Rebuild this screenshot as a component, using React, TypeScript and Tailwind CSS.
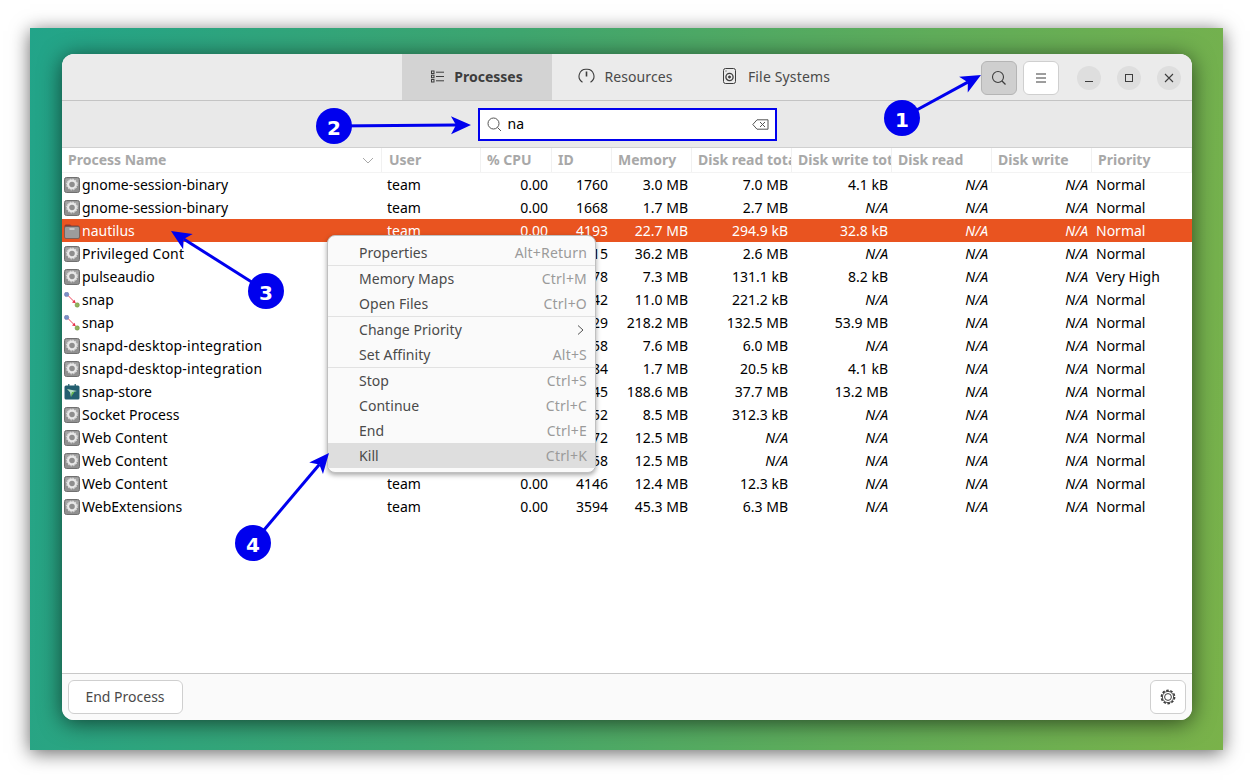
import React from "react";

const cols = "grid grid-cols-[320px_99px_71px_60px_80px_100px_100px_100px_100px_100px]";
type Kind = "exec" | "folder" | "snap" | "store";
type Row = [Kind, string, string, string, string, string, string, string];
const rows: Row[] = [
  ["exec", "gnome-session-binary", "1760", "3.0 MB", "7.0 MB", "4.1 kB", "Normal", ""],
  ["exec", "gnome-session-binary", "1668", "1.7 MB", "2.7 MB", "N/A", "Normal", ""],
  ["folder", "nautilus", "4193", "22.7 MB", "294.9 kB", "32.8 kB", "Normal", "sel"],
  ["exec", "Privileged Cont", "4115", "36.2 MB", "2.6 MB", "N/A", "Normal", ""],
  ["exec", "pulseaudio", "1678", "7.3 MB", "131.1 kB", "8.2 kB", "Very High", ""],
  ["snap", "snap", "1642", "11.0 MB", "221.2 kB", "N/A", "Normal", ""],
  ["snap", "snap", "1529", "218.2 MB", "132.5 MB", "53.9 MB", "Normal", ""],
  ["exec", "snapd-desktop-integration", "1958", "7.6 MB", "6.0 MB", "N/A", "Normal", ""],
  ["exec", "snapd-desktop-integration", "1884", "1.7 MB", "20.5 kB", "4.1 kB", "Normal", ""],
  ["store", "snap-store", "2045", "188.6 MB", "37.7 MB", "13.2 MB", "Normal", ""],
  ["exec", "Socket Process", "4052", "8.5 MB", "312.3 kB", "N/A", "Normal", ""],
  ["exec", "Web Content", "4172", "12.5 MB", "N/A", "N/A", "Normal", ""],
  ["exec", "Web Content", "4158", "12.5 MB", "N/A", "N/A", "Normal", ""],
  ["exec", "Web Content", "4146", "12.4 MB", "12.3 kB", "N/A", "Normal", ""],
  ["exec", "WebExtensions", "3594", "45.3 MB", "6.3 MB", "N/A", "Normal", ""],
];

function ProcIcon({ kind }: { kind: Kind }) {
  if (kind === "exec")
    return (
      <svg width="16" height="16" viewBox="0 0 16 16">
        <rect x="0.5" y="0.5" width="15" height="15" rx="2" fill="#909090" stroke="#707070" />
        <rect x="1.5" y="1.5" width="13" height="6" rx="1" fill="#a4a4a4" />
        <circle cx="8" cy="7.5" r="3.9" fill="#8e8e8e" stroke="#e8e8e8" strokeWidth="2.2" />
        <circle cx="8" cy="7.5" r="5.4" fill="none" stroke="#e8e8e8" strokeWidth="1" strokeDasharray="1.5 1.3" />
      </svg>
    );
  if (kind === "folder")
    return (
      <svg width="16" height="16" viewBox="0 0 16 16">
        <path d="M0.5 3a1.5 1.5 0 0 1 1.5-1.5h4l1.5 1H14a1.5 1.5 0 0 1 1.5 1.5V6H0.5z" fill="#8f3a30" />
        <rect x="0.5" y="3.5" width="15" height="12" rx="1.5" fill="#9c9c9c" stroke="#6b5a55" strokeWidth="0.8" />
        <rect x="5.5" y="5.5" width="5" height="1" fill="#f2f2f2" />
      </svg>
    );
  if (kind === "snap")
    return (
      <svg width="16" height="16" viewBox="0 0 16 16">
        <line x1="4" y1="3.5" x2="11" y2="10.5" stroke="#e8304a" strokeWidth="0.9" />
        <path d="M11.6 11.2 L8 10.4 L10.6 7.8 Z" fill="#e8304a" />
        <circle cx="2.6" cy="2.4" r="2.2" fill="#7b8fc9" stroke="#5f6e9e" strokeWidth="0.5" />
        <circle cx="13.2" cy="13" r="2.2" fill="#93b35a" stroke="#6f8a42" strokeWidth="0.5" />
      </svg>
    );
  return (
    <svg width="16" height="16" viewBox="0 0 16 16">
      <rect x="4" y="0" width="1.5" height="3" fill="#4a7a82" />
      <rect x="10.5" y="0" width="1.5" height="3" fill="#4a7a82" />
      <rect x="0.5" y="1.5" width="15" height="14" rx="1.5" fill="#235f70" />
      <path d="M3 5 L13 7 L8 8.2 L7 13 L6 8.2z" fill="#b8e0c4" />
      <path d="M8 8.2 L10.5 7.8 L7 13z" fill="#6cc04a" />
    </svg>
  );
}

function Entry({ r }: { r: Row }) {
  const sel = r[7] === "sel";
  const val = (v: string) => (
    <div className={`pr-[4px] text-right ${v === "N/A" ? "italic" : ""}`}>{v}</div>
  );
  return (
    <div className={`${cols} h-[23px] leading-[23px] ${sel ? "bg-[#e95420] text-white" : "text-black"}`}>
      <div className="flex items-center pl-[2px]">
        <span className="mr-[2px] flex w-[16px] shrink-0"><ProcIcon kind={r[0]} /></span>
        <span className={r[1].startsWith("snapd") ? "tracking-[0.2px]" : r[1].startsWith("Privileged") ? "tracking-[0.15px]" : ""}>{r[1]}</span>
      </div>
      <div className="pl-[5px]">team</div>
      {val("0.00")}
      {val(r[2])}
      {val(r[3])}
      {val(r[4])}
      {val(r[5])}
      {val("N/A")}
      {val("N/A")}
      <div className="pl-[4px]">{r[6]}</div>
    </div>
  );
}

const heads = ["Process Name", "User", "% CPU", "ID", "Memory", "Disk read total", "Disk write total", "Disk read", "Disk write", "Priority"];

function MenuItem({ label, keys, arrow, hot }: { label: string; keys?: string; arrow?: boolean; hot?: boolean }) {
  return (
    <div className={`flex h-[25px] items-center justify-between pl-[31px] pr-[8px] ${hot ? "bg-[#dedede]" : ""}`}>
      <span className="tracking-[0.05px] text-[#4a4a4a]">{label}</span>
      {keys && <span className="tracking-[0.2px] text-[#9a9a9a]">{keys}</span>}
      {arrow && (
        <svg width="16" height="16" viewBox="0 0 16 16" fill="none" stroke="#555" strokeWidth="1" className="-mr-[1px]">
          <path d="M6 3.5 L11 8 L6 12.5" />
        </svg>
      )}
    </div>
  );
}

function Arrow({ x1, y1, x2, y2, n, cx, cy }: { x1: number; y1: number; x2: number; y2: number; n: string; cx: number; cy: number }) {
  const a = Math.atan2(y2 - y1, x2 - x1);
  const ux = Math.cos(a), uy = Math.sin(a);
  const px = -uy, py = ux;
  const L = 20, W = 9, N = 15;
  const pts = [
    [x2, y2],
    [x2 - ux * L + px * W, y2 - uy * L + py * W],
    [x2 - ux * N, y2 - uy * N],
    [x2 - ux * L - px * W, y2 - uy * L - py * W],
  ].map((p) => p.join(",")).join(" ");
  return (
    <g>
      <line x1={x1} y1={y1} x2={x2 - ux * N} y2={y2 - uy * N} stroke="#0000ee" strokeWidth="3" />
      <polygon points={pts} fill="#0000ee" />
      <circle cx={cx} cy={cy} r="18" fill="#0000ee" />
      <text x={cx} y={cy + 9} textAnchor="middle" fill="#fff" fontSize="20" fontWeight="700" fontFamily="'DejaVu Sans', sans-serif">{n}</text>
    </g>
  );
}

export default function App() {
  return (
    <div className="relative h-[782px] w-[1253px] overflow-hidden bg-white pl-[30px] pt-[28px] font-['Noto_Sans',sans-serif] text-[14px]">
      <div className="h-[722px] w-[1193px] bg-[linear-gradient(98deg,#22a489_0%,#3fa66f_38%,#60ad5a_70%,#7ab24a_100%)] pl-[32px] pt-[26px] shadow-[0_3px_18px_rgba(0,0,0,0.6)]">
        <div className="relative flex h-[666px] w-[1130px] flex-col overflow-hidden rounded-[12px] bg-white shadow-[0_3px_22px_rgba(0,0,0,0.6)]">
          {/* header */}
          <div className="grid h-[47px] shrink-0 grid-cols-[340px_450px_340px] border-b border-[#c4c4c4] bg-[#ebebeb]">
            <div />
            <div className="grid grid-cols-3 text-[#4a4a4a]">
              <div className="flex items-center justify-center gap-[10px] bg-[#d3d3d3] pb-[2px] font-bold text-[#3d3d3d]">
                <svg width="13" height="13" viewBox="0 0 13 13" fill="none" stroke="#3d3d3d" strokeWidth="1">
                  <rect x="0.5" y="1" width="2.5" height="2.5" />
                  <rect x="0.5" y="5.2" width="2.5" height="2.5" />
                  <rect x="0.5" y="9.5" width="2.5" height="2.5" />
                  <path d="M5 2.2h8M5 6.5h8M5 10.8h8" />
                </svg>
                <span>Processes</span>
              </div>
              <div className="flex items-center justify-center gap-[9px] pb-[2px] pr-[3px]">
                <svg width="17" height="16" viewBox="0 0 17 16" fill="none" stroke="#3d3d3d" strokeWidth="1.1">
                  <path d="M4.5 14.2 A7 7 0 0 1 8.5 1.2 A7 7 0 0 1 12.5 14.2" />
                  <path d="M8.5 3.5v5" strokeWidth="1.6" />
                </svg>
                <span className="tracking-[0.1px]">Resources</span>
              </div>
              <div className="flex items-center justify-center gap-[12px] pb-[2px] pr-[1px]">
                <svg width="13" height="16" viewBox="0 0 13 16" fill="none" stroke="#3d3d3d" strokeWidth="1">
                  <rect x="0.5" y="0.5" width="12" height="15" rx="2" />
                  <circle cx="6.5" cy="9" r="3.6" strokeWidth="1.3" />
                  <circle cx="6.5" cy="9" r="1" fill="#3d3d3d" />
                  <path d="M2.5 3h1" />
                </svg>
                <span className="tracking-[0.15px]">File Systems</span>
              </div>
            </div>
            <div className="flex items-center pl-[129px] pt-[1px]">
              <div className="flex h-[34px] w-[36px] items-center justify-center rounded-[6px] border border-[#b5b5b5] bg-[#cfcfcf]">
                <svg width="16" height="16" viewBox="0 0 16 16" fill="none" stroke="#3d3d3d" strokeWidth="1.1">
                  <circle cx="7" cy="7" r="5.5" />
                  <path d="M11 11l3.5 3.5" strokeWidth="1.3" />
                </svg>
              </div>
              <div className="ml-[6px] flex h-[34px] w-[36px] items-center justify-center rounded-[6px] border border-[#cfcfcf] bg-white">
                <svg width="12" height="12" viewBox="0 0 12 12" stroke="#3d3d3d" strokeWidth="1"><path d="M1 2h10M1 6h10M1 10h10" /></svg>
              </div>
              <div className="ml-[18px] flex h-[24px] w-[24px] items-center justify-center rounded-full bg-[#dedede]">
                <svg width="10" height="10" viewBox="0 0 10 10" stroke="#3d3d3d" strokeWidth="1"><path d="M1 8.5h8" /></svg>
              </div>
              <div className="ml-[16px] flex h-[24px] w-[24px] items-center justify-center rounded-full bg-[#dedede]">
                <svg width="10" height="10" viewBox="0 0 10 10" fill="none" stroke="#3d3d3d" strokeWidth="1"><rect x="1.5" y="1.5" width="7" height="7" /></svg>
              </div>
              <div className="ml-[16px] flex h-[24px] w-[24px] items-center justify-center rounded-full bg-[#dedede]">
                <svg width="10" height="10" viewBox="0 0 10 10" stroke="#3d3d3d" strokeWidth="1.1"><path d="M1 1l8 8M9 1l-8 8" /></svg>
              </div>
            </div>
          </div>
          {/* search bar */}
          <div className="flex h-[47px] shrink-0 items-center justify-center border-b border-[#d0d0d0] bg-[#e9e9e9]">
            <div className="flex h-[33px] w-[299px] items-center border-[2px] border-[#0000ee] bg-white pl-[7px] pr-[6px] text-black">
              <svg width="15" height="15" viewBox="0 0 15 15" fill="none" stroke="#555" strokeWidth="1"><circle cx="6.5" cy="6.5" r="5.5" /><path d="M10.5 10.5l3.5 3.5" /></svg>
              <span className="ml-[6px] flex-1 pb-[2px]">na</span>
              <svg width="17" height="11" viewBox="0 0 17 11" fill="none" stroke="#555" strokeWidth="1">
                <path d="M5 .8h11v9.4H5L.8 5.5z" />
                <path d="M8 3l5 5M13 3l-5 5" />
              </svg>
            </div>
          </div>
          {/* table */}
          <div className="flex-1 bg-white">
            <div className={`${cols} h-[25px] border-b border-[#f3f3f3] font-bold leading-[24px] text-[#a8a8a8]`}>
              {heads.map((h, i) => (
                <div key={h} className={`relative overflow-hidden whitespace-nowrap border-r border-[#f1f1f1] ${i === 1 ? "pl-[7px]" : "pl-[6px]"}`}>
                  {h}
                  {i === 0 && (
                    <svg width="12" height="7" viewBox="0 0 12 7" fill="none" stroke="#a8a8a8" strokeWidth="1" className="absolute right-[7px] top-[9px]"><path d="M1 1l5 5 5-5" /></svg>
                  )}
                </div>
              ))}
            </div>
            {rows.map((r, i) => <Entry key={i} r={r} />)}
          </div>
          {/* footer */}
          <div className="flex h-[47px] shrink-0 items-center justify-between border-t border-[#c8c8c8] bg-[#fafafa] px-[6px]">
            <div className="flex h-[34px] w-[115px] items-center justify-center rounded-[6px] border border-[#cfcfcf] bg-white pb-[2px] pr-[1px] text-[#4a4a4a]">End Process</div>
            <div className="flex h-[34px] w-[36px] items-center justify-center rounded-[6px] border border-[#cfcfcf] bg-white">
              <svg width="16" height="16" viewBox="0 0 16 16" fill="none" stroke="#3d3d3d">
                <circle cx="8" cy="8" r="6.6" strokeWidth="1.6" strokeDasharray="2.6 1.55" />
                <circle cx="8" cy="8" r="5.6" strokeWidth="0.9" />
                <circle cx="8" cy="8" r="3.4" strokeWidth="1" />
              </svg>
            </div>
          </div>
          {/* context menu */}
          <div className="absolute left-[265px] top-[181px] w-[269px] rounded-[8px] border border-[#c0c0c0] bg-[#fafafa] pb-[4px] pt-[4px] shadow-[0_2px_5px_rgba(0,0,0,0.35)]">
            <MenuItem label="Properties" keys="Alt+Return" />
            <div className="h-px bg-[#e2e2e2]" />
            <MenuItem label="Memory Maps" keys="Ctrl+M" />
            <MenuItem label="Open Files" keys="Ctrl+O" />
            <div className="h-px bg-[#e2e2e2]" />
            <MenuItem label="Change Priority" arrow />
            <MenuItem label="Set Affinity" keys="Alt+S" />
            <div className="h-px bg-[#e2e2e2]" />
            <MenuItem label="Stop" keys="Ctrl+S" />
            <MenuItem label="Continue" keys="Ctrl+C" />
            <MenuItem label="End" keys="Ctrl+E" />
            <MenuItem label="Kill" keys="Ctrl+K" hot />
          </div>
        </div>
      </div>
      {/* annotations */}
      <svg width="1253" height="782" viewBox="0 0 1253 782" className="pointer-events-none absolute left-0 top-0">
        <Arrow x1={902} y1={118} x2={981} y2={75} n="1" cx={902} cy={118} />
        <Arrow x1={334} y1={126} x2={471} y2={125} n="2" cx={334} cy={126} />
        <Arrow x1={266} y1={291} x2={171} y2={231} n="3" cx={266} cy={291} />
        <Arrow x1={253} y1={543} x2={329} y2={453} n="4" cx={253} cy={543} />
      </svg>
    </div>
  );
}
